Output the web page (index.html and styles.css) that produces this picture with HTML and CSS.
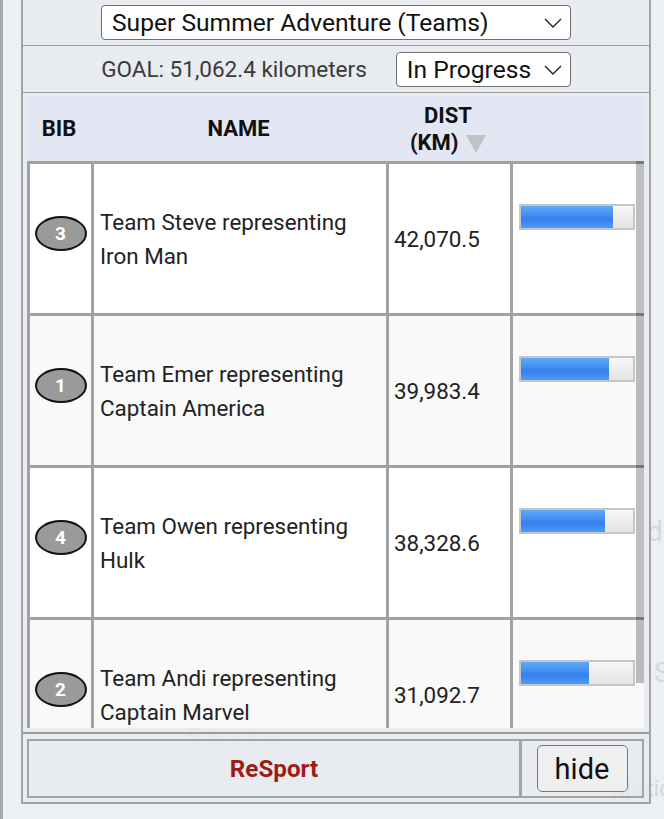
FILE: index.html
```html
<!DOCTYPE html>
<html lang="en">
  <head>
    <meta charset="UTF-8" />
    <meta name="viewport" content="width=device-width, initial-scale=1.0" />
    <title>ReSport - Leaderboard</title>

    <link rel="stylesheet" href="styles.css">
  </head>

  <body>
    <div class="map">
      <span class="place ocean">Ocean</span>
      <span class="place states">S</span>
      <span class="place canada">da</span>
      <span class="place mexico">Mexic</span>
    </div>

    <div class="panel">
      <div class="race-row">
        <div class="picker wide">
          <select name="race">
            <option>Super Summer Adventure (Teams)</option>
          </select>
          <svg class="chevron" viewBox="0 0 18 10"><polyline points="1,1 9,9 17,1" /></svg>
        </div>
      </div>

      <div class="goal-row">
        <span class="goal">GOAL: 51,062.4 kilometers</span>
        <div class="picker">
          <select name="status">
            <option>In Progress</option>
          </select>
          <svg class="chevron" viewBox="0 0 18 10"><polyline points="1,1 9,9 17,1" /></svg>
        </div>
      </div>

      <div class="board-wrap">
        <div class="board">
          <table class="standings">
            <colgroup>
              <col class="c-bib" />
              <col class="c-name" />
              <col class="c-dist" />
              <col class="c-bar" />
            </colgroup>
            <thead>
              <tr>
                <th>BIB</th>
                <th>NAME</th>
                <th>DIST<br />(KM) <span class="sort-down"></span></th>
                <th></th>
              </tr>
            </thead>
            <tbody>
              <tr>
                <td class="bib"><span class="badge">3</span></td>
                <td class="name">Team Steve representing<br />Iron Man</td>
                <td class="dist">42,070.5</td>
                <td class="bar"><progress value="42070.5" max="51062.4"></progress></td>
              </tr>
              <tr>
                <td class="bib"><span class="badge">1</span></td>
                <td class="name">Team Emer representing<br />Captain America</td>
                <td class="dist">39,983.4</td>
                <td class="bar"><progress value="39983.4" max="51062.4"></progress></td>
              </tr>
              <tr>
                <td class="bib"><span class="badge">4</span></td>
                <td class="name">Team Owen representing<br />Hulk</td>
                <td class="dist">38,328.6</td>
                <td class="bar"><progress value="38328.6" max="51062.4"></progress></td>
              </tr>
              <tr>
                <td class="bib"><span class="badge">2</span></td>
                <td class="name">Team Andi representing<br />Captain Marvel</td>
                <td class="dist">31,092.7</td>
                <td class="bar"><progress value="31092.7" max="51062.4"></progress></td>
              </tr>
            </tbody>
          </table>
        </div>
        <div class="thumb"></div>
      </div>

      <div class="footer-wrap">
        <table class="footer">
          <tr>
            <td class="brand">ReSport</td>
            <td class="toggle"><button class="hide">hide</button></td>
          </tr>
        </table>
      </div>
    </div>
  </body>
</html>
```

FILE: styles.css
```css
* {
  box-sizing: border-box;
}

body {
  margin: 0;
  height: 819px;
  overflow: hidden;
  position: relative;
  border-left: 3px solid #a9a9a9;
  background: #ecf0f3;
  font-family: Roboto, "Liberation Sans", sans-serif;
  color: #222;
}

/* faint labels of the map underneath */
.place {
  position: absolute;
  color: #d2d8e0;
  font-size: 28px;
  letter-spacing: 4px;
}

.ocean {
  left: 186px;
  top: 728px;
  font-size: 14px;
  line-height: 10px;
  letter-spacing: 12px;
  color: #d0d7e2;
}

.states {
  left: 651px;
  top: 656px;
  color: #d6d8db;
}

.canada {
  left: 644px;
  top: 515px;
  color: #d6d8db;
}

.mexico {
  left: 609px;
  top: 776px;
  letter-spacing: 0;
  font-size: 22px;
  color: #d2d4d7;
}

.panel {
  position: relative;
  width: 630px;
  margin-left: 18px;
  border: 2px solid #a3a3a3;
  border-top: 0;
  background: rgba(231, 234, 237, 0.8);
}

.race-row {
  display: flex;
  justify-content: center;
  padding: 5px 0;
  border-bottom: 1px solid #9c9c9c;
}

.goal-row {
  display: flex;
  justify-content: center;
  align-items: center;
  gap: 29px;
  height: 47px;
  border-bottom: 1px solid #9c9c9c;
}

.goal {
  font-size: 22.5px;
  color: #3a3a3a;
}

.picker {
  position: relative;
  display: inline-block;
}

.picker select {
  -webkit-appearance: none;
  appearance: none;
  height: 35px;
  padding: 0 38px 0 10px;
  border: 1px solid #6e6e6e;
  border-radius: 4px;
  background: #fff;
  font-family: Roboto, "Liberation Sans", sans-serif;
  font-size: 24.6px;
  color: #111;
}

.picker.wide select {
  width: 470px;
}

.picker .chevron {
  position: absolute;
  right: 9px;
  top: 13px;
  width: 18px;
  height: 10px;
  fill: none;
  stroke: #222;
  stroke-width: 1.4;
  pointer-events: none;
}

.board-wrap {
  position: relative;
  padding: 3px 5px 4px 4px;
  border-bottom: 2px solid #9c9c9c;
}

.board {
  height: 632px;
  overflow-y: auto;
  scrollbar-width: none;
  background: #f9f9f9;
}

/* slim scroll indicator drawn over the right edge of the list */
.thumb {
  position: absolute;
  top: 3px;
  right: 5px;
  width: 8px;
  height: 587px;
  background: rgba(0, 0, 0, 0.25);
  pointer-events: none;
}

.standings {
  width: 100%;
  table-layout: fixed;
  border-collapse: separate;
  border-spacing: 0;
}

.c-bib {
  width: 64px;
}

.c-name {
  width: 295px;
}

.c-dist {
  width: 124px;
}

.c-bar {
  width: 134px;
}

.standings th {
  position: sticky;
  top: 0;
  z-index: 1;
  height: 65px;
  padding: 0;
  background: #e2e7f3;
  font-size: 22px;
  line-height: 27px;
  font-weight: bold;
  color: #111;
  text-align: center;
}

.sort-down {
  display: inline-block;
  vertical-align: -3px;
  margin-left: 2px;
  border-left: 10px solid transparent;
  border-right: 10px solid transparent;
  border-top: 18px solid #c2c2c2;
}

.standings td {
  height: 152px;
  padding: 0;
  border-top: 3px solid #a1a1a1;
  border-left: 3px solid #a1a1a1;
  vertical-align: middle;
  font-size: 22.4px;
  line-height: 34px;
  background: #fff;
}

.standings tbody tr:nth-child(2n) td {
  background: #f9f9f9;
}

.standings td.bib {
  text-align: center;
}

.badge {
  display: inline-block;
  width: 52px;
  height: 35px;
  margin-bottom: 10px;
  border: 2px solid #111;
  border-radius: 50%;
  background: #9a9a9a;
  color: #fff;
  font-size: 19px;
  font-weight: bold;
  line-height: 31px;
  vertical-align: middle;
}

.standings td.name {
  padding-left: 6px;
}

.standings td.dist {
  padding-left: 5px;
}

.standings td.bar {
  padding-left: 6px;
}

.bar progress {
  -webkit-appearance: none;
  appearance: none;
  display: block;
  width: 116px;
  height: 26px;
  margin-bottom: 44px;
  border: 2px solid #c6c6c6;
  background: #efefef;
}

.bar progress::-webkit-progress-bar {
  background: linear-gradient(#f8f8f8, #e4e4e4);
}

.bar progress::-webkit-progress-value {
  background: linear-gradient(#5fa9f8 0%, #4690f4 40%, #3580f0 60%, #4f9bf5 100%);
}

.footer-wrap {
  padding: 5px 5px 4px 4px;
}

.footer {
  width: 100%;
  height: 59px;
  border: 2px solid #a3a3a3;
  border-spacing: 0;
}

.footer td {
  padding: 0;
  text-align: center;
  vertical-align: middle;
}

.brand {
  font-size: 24.2px;
  font-weight: bold;
  color: #9c1d16;
}

.toggle {
  width: 123px;
  border-left: 3px solid #a3a3a3;
}

.hide {
  width: 91px;
  height: 47px;
  padding: 0;
  border: 1px solid #767676;
  border-radius: 5px;
  background: #efefef;
  font-family: Roboto, "Liberation Sans", sans-serif;
  font-size: 29px;
  color: #111;
}
```
